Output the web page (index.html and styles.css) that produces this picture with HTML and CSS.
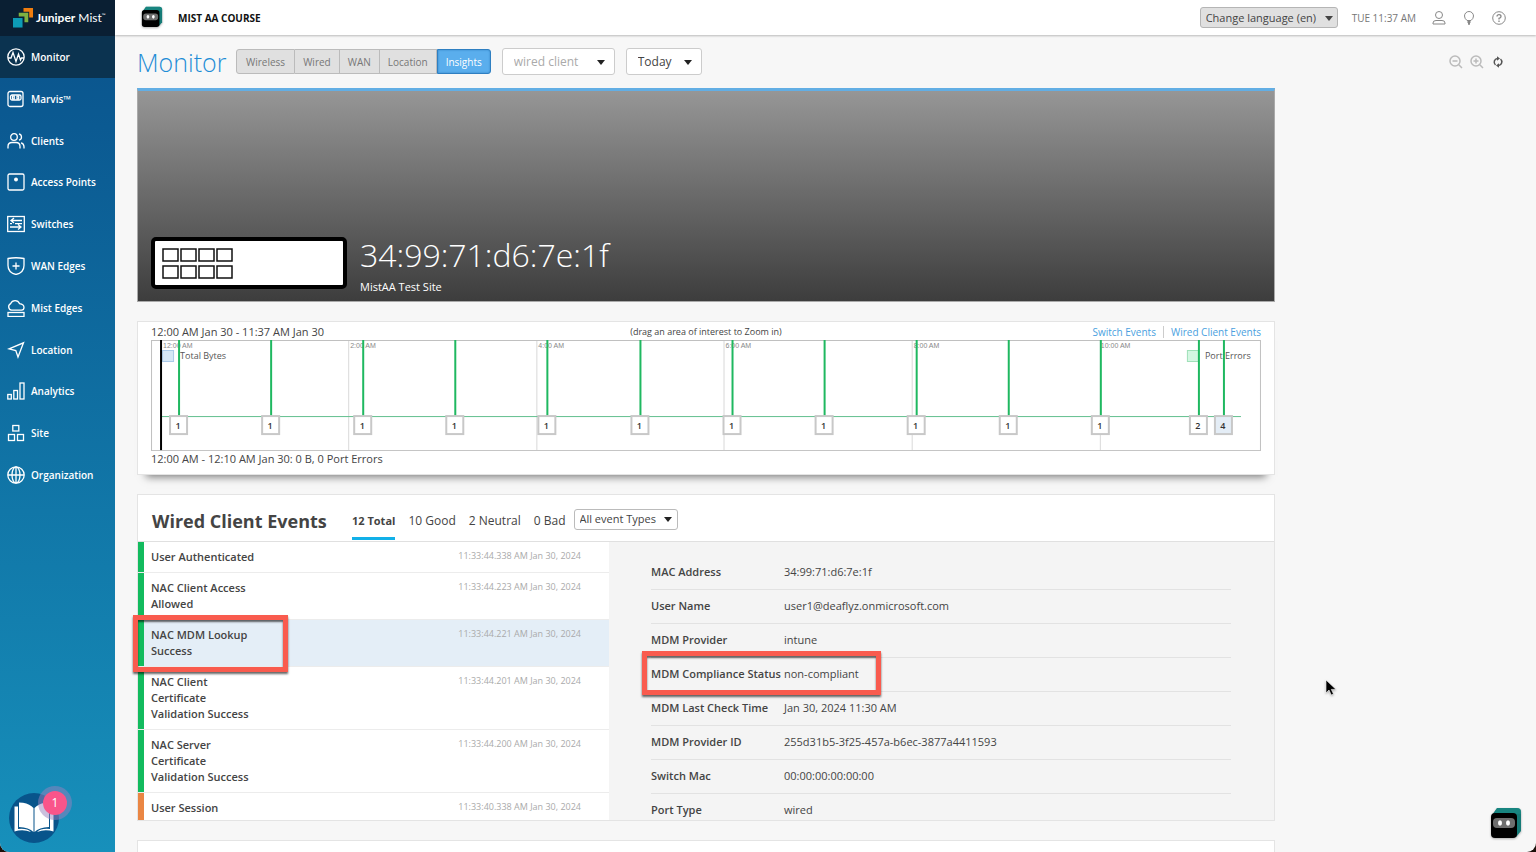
FILE: index.html
```html
<!DOCTYPE html>
<html lang="en">
<head>
<meta charset="utf-8">
<title>Juniper Mist - Monitor</title>
<link rel="stylesheet" href="styles.css">
</head>
<body>
<svg class="defs" aria-hidden="true">
  <defs>
    <symbol id="bot" viewBox="0 0 32 34">
      <path d="M7 1h20q4 0 4 4v19l-5 6L2 8z" fill="#157b77"/>
      <path d="M7 1h20q4 0 4 4v2L5 6z" fill="#1b8f89" opacity=".5"/>
      <rect x="1" y="6" width="26" height="25" rx="4" fill="#000"/>
      <rect x="3" y="11" width="22" height="10" rx="4" fill="#6e6e6e"/>
      <ellipse cx="10" cy="16" rx="2" ry="2.7" fill="#fff"/>
      <ellipse cx="18" cy="16" rx="2" ry="2.7" fill="#fff"/>
    </symbol>
    <symbol id="marker" viewBox="0 0 20 96" overflow="visible">
      <path d="M10 0v76" stroke="#1fb860" stroke-width="2"/>
      <rect x="1" y="76" width="17" height="18" stroke="#c8c8c8" stroke-width="2"/>
    </symbol>
  </defs>
</svg>
<div class="app">
  <aside class="sidebar">
    <a class="brand" href="#">
      <svg class="brand-mark" viewBox="0 0 22 21" aria-hidden="true">
        <path d="M11 0h10v10h-4V4h-6z" fill="#ef7d0f"/>
        <path d="M6 5h10v10h-4V9H6z" fill="#7fb241"/>
        <path d="M0 10.500h10v10H0z" fill="#0d9bb5"/>
      </svg>
      <span class="brand-name"><b>Juniper</b> Mist<sup>™</sup></span>
    </a>
    <nav class="menu">
      <a class="menu-item active" href="#"><svg viewBox="0 0 18 18"><circle cx="9" cy="9" r="8.200"/><path d="M1 10h3l2-5.500 3 9L11.500 6l2 6 1-2H17"/></svg>Monitor</a>
      <a class="menu-item" href="#"><svg viewBox="0 0 18 18"><rect x="1" y="1.500" width="15" height="15" rx="2"/><rect x="3.500" y="5" width="10.500" height="5" rx="1.500"/><rect x="5.500" y="6" width="1.700" height="3"/><rect x="10" y="6" width="1.700" height="3"/></svg>Marvis™</a>
      <a class="menu-item" href="#"><svg viewBox="0 0 18 18"><circle cx="7" cy="5" r="3.300"/><path d="M1 16.500v-2q0-4 4-4h4q4 0 4 4v2M12 1.800a3.300 3.300 0 0 1 0 6.400M14 10.800q3 .7 3 4v1.700"/></svg>Clients</a>
      <a class="menu-item" href="#"><svg viewBox="0 0 18 18"><rect x="1" y="1" width="16" height="16" rx="1.500"/><circle cx="9" cy="6.500" r="1.300" fill="#fff"/></svg>Access Points</a>
      <a class="menu-item" href="#"><svg viewBox="0 0 18 18"><rect x=".7" y="1.500" width="16.600" height="15"/><path d="M15 5.500H4M7 3 4 5.500 7 8M3 12h11M11 9.500l3 2.500-3 2.500M8 8.700h7M3 8.700h2"/></svg>Switches</a>
      <a class="menu-item" href="#"><svg viewBox="0 0 18 18"><path d="M1 1.500q8-1.500 16 0v7q0 7-8 9-8-2-8-9zM9 5.500v7M5.500 9h7"/></svg>WAN Edges</a>
      <a class="menu-item" href="#"><svg viewBox="0 0 18 18"><path d="M4.500 11.200a3.500 3.500 0 0 1-.8-6.600 4.700 4.700 0 0 1 8.800 0q4.500.6 4.500 3.800 0 2.500-2.500 2.800z"/><rect x="1" y="13.500" width="16" height="4"/></svg>Mist Edges</a>
      <a class="menu-item" href="#"><svg viewBox="0 0 18 18"><path d="M16.500 1.800 11 16l-2.200-6.500L2 7.800z"/></svg>Location</a>
      <a class="menu-item" href="#"><svg viewBox="0 0 18 18"><rect x=".8" y="12.500" width="3.500" height="4.500"/><rect x="6.800" y="8.500" width="3.700" height="8.500"/><rect x="13" y="1" width="4" height="16"/></svg>Analytics</a>
      <a class="menu-item" href="#"><svg viewBox="0 0 18 18"><rect x="5.800" y="1.500" width="6" height="5.500"/><rect x="1.500" y="10.500" width="6" height="6"/><rect x="10.500" y="10.500" width="6" height="6"/></svg>Site</a>
      <a class="menu-item" href="#"><svg viewBox="0 0 18 18"><circle cx="9" cy="9" r="8.200"/><ellipse cx="9" cy="9" rx="4" ry="8.200"/><path d="M1 9h16M9 1v16"/></svg>Organization</a>
    </nav>
    <button class="guide" aria-label="Open guide, 1 new item">
      <svg viewBox="0 0 50 50" aria-hidden="true">
        <circle cx="25" cy="25" r="25" fill="#08548b"/>
        <path d="M5.500 13.500H9V36q9-1 13 3Q14 36 5.500 38.500zM44.500 13.500H41V36q-9-1-13 3 8-3 16.500-.5z" fill="#fff"/>
        <path d="M10 9.500q4 0 4 .3 7 1.200 10.500 5.200V39Q20 34.500 10 34zM40 9.500q-4 0-4 .3-7 1.200-10.500 5.200V39Q30 34.500 40 34z" fill="#fff"/>
      </svg>
      <span class="guide-count">1</span>
    </button>
  </aside>

  <div class="page">
    <header class="topbar">
      <svg class="bot bot-small" aria-hidden="true"><use href="#bot"/></svg>
      <strong class="org">MIST AA COURSE</strong>
      <label class="select select-lang"><select aria-label="Language"><option>Change language (en)</option></select></label>
      <time class="clock">TUE 11:37 AM</time>
      <button class="icon-btn" aria-label="Account"><svg viewBox="0 0 14 14"><circle cx="7" cy="4" r="3.500"/><path d="M1 13v-1q0-2.500 3-2.500h6q3 0 3 2.500v1z"/></svg></button>
      <button class="icon-btn" aria-label="Tips"><svg viewBox="0 0 14 14"><path d="M5 9.500Q2.500 7.500 2.500 5a4.500 4.500 0 0 1 9 0Q11.500 7.500 9 9.500z"/><path d="M5.500 11h3M6 12.800h2" stroke-width="2"/></svg></button>
      <button class="icon-btn" aria-label="Help"><svg viewBox="0 0 14 14"><circle cx="7" cy="7" r="6.300"/><path d="M5 5.500Q5 3.700 7 3.700t2 1.700Q9 6.500 7 7.300V8.500M7 9.600v1.300" stroke-width="1.300"/></svg></button>
    </header>

    <main class="content">
      <div class="toolbar">
        <h1 class="title">Monitor</h1>
        <div class="tabs">
          <button>Wireless</button><button>Wired</button><button>WAN</button><button>Location</button><button class="on">Insights</button>
        </div>
        <label class="select select-client"><select aria-label="Scope"><option>wired client</option></select></label>
        <label class="select select-day"><select aria-label="Time range"><option>Today</option></select></label>
        <div class="tools">
          <button class="icon-btn dim" aria-label="Zoom out"><svg viewBox="0 0 14 14"><circle cx="6" cy="6" r="5"/><path d="M9.800 9.800 13 13M3.500 6h5"/></svg></button>
          <button class="icon-btn dim" aria-label="Zoom in"><svg viewBox="0 0 14 14"><circle cx="6" cy="6" r="5"/><path d="M9.800 9.800 13 13M3.500 6h5M6 3.500v5"/></svg></button>
          <button class="icon-btn dark" aria-label="Refresh"><svg viewBox="0 0 14 14"><path d="M4.500 10A3.700 3.700 0 0 1 6.500 3.500M9.500 4a3.700 3.700 0 0 1-2 6.500"/><path d="M6 1.300 9 3.500 6 5.800zM8 8.200 5 10.500l3 2.300z" fill="#555" stroke="none"/></svg></button>
        </div>
      </div>

      <div class="stack">
        <section class="hero">
          <svg class="device" viewBox="0 0 196 52" aria-hidden="true">
            <rect x="2" y="2" width="192" height="48" rx="3" fill="#fff" stroke="#000" stroke-width="4"/>
            <g fill="#fff" stroke="#111" stroke-width="1.500">
              <path d="M12 12h15v12H12zM30 12h15v12H30zM48 12h15v12H48zM66 12h15v12H66zM12 29h15v12H12zM30 29h15v12H30zM48 29h15v12H48zM66 29h15v12H66z"/>
            </g>
          </svg>
          <div>
            <h2 class="mac">34:99:71:d6:7e:1f</h2>
            <p class="site">MistAA Test Site</p>
          </div>
        </section>

        <section class="card timeline">
          <div class="timeline-head">
            <span>12:00 AM Jan 30 - 11:37 AM Jan 30</span>
            <span class="hint">(drag an area of interest to Zoom in)</span>
            <span class="links"><a href="#">Switch Events</a><a href="#">Wired Client Events</a></span>
          </div>
          <svg class="chart" viewBox="0 0 1109 111" role="img" aria-label="Events over time">
            <rect x=".5" y=".5" width="1108" height="110" fill="#fff" stroke="#c0c0c0"/>
            <path d="M197.500 1v109M385.500 1v109M572.500 1v109M760.500 1v109M948.500 1v109" stroke="#d9d9d9"/>
            <rect x="11.500" y="10.500" width="11" height="11" fill="#d5e7f6" stroke="#a9c9e8"/>
            <rect x="1035.500" y="10.500" width="11" height="11" fill="#d4f7e2" stroke="#9fe0b8"/>
            <rect x="10" y="76" width="1079" height="1" fill="#63c08f"/>
            <g class="axis">
              <text x="12" y="8">12:00 AM</text><text x="199" y="8">2:00 AM</text><text x="387" y="8">4:00 AM</text>
              <text x="574" y="8">6:00 AM</text><text x="762" y="8">8:00 AM</text><text x="949" y="8">10:00 AM</text>
            </g>
            <g class="legend"><text x="29" y="19">Total Bytes</text><text x="1053" y="19">Port Errors</text></g>
            <g fill="#fff">
              <use href="#marker" x="18" width="20" height="96"/><use href="#marker" x="110" width="20" height="96"/>
              <use href="#marker" x="202" width="20" height="96"/><use href="#marker" x="294" width="20" height="96"/>
              <use href="#marker" x="386" width="20" height="96"/><use href="#marker" x="479" width="20" height="96"/>
              <use href="#marker" x="571" width="20" height="96"/><use href="#marker" x="663" width="20" height="96"/>
              <use href="#marker" x="755" width="20" height="96"/><use href="#marker" x="847" width="20" height="96"/>
              <use href="#marker" x="939" width="20" height="96"/><use href="#marker" x="1037" width="20" height="96"/>
            </g>
            <use href="#marker" x="1062" width="20" height="96" fill="#e4edf6"/>
            <g class="counts">
              <text x="27" y="89">1</text><text x="119" y="89">1</text><text x="211" y="89">1</text><text x="303" y="89">1</text>
              <text x="395" y="89">1</text><text x="488" y="89">1</text><text x="580" y="89">1</text><text x="672" y="89">1</text>
              <text x="764" y="89">1</text><text x="856" y="89">1</text><text x="948" y="89">1</text><text x="1046" y="89">2</text><text x="1071" y="89">4</text>
            </g>
            <path d="M10 0v110" stroke="#000" stroke-width="2"/>
          </svg>
          <p class="timeline-foot">12:00 AM - 12:10 AM Jan 30: 0 B, 0 Port Errors</p>
        </section>

        <section class="card events">
          <div class="events-head">
            <h2 class="events-title">Wired Client Events</h2>
            <div class="filters">
              <button class="on">12 Total</button><button>10 Good</button><button>2 Neutral</button><button>0 Bad</button>
            </div>
            <label class="select select-type"><select aria-label="Event type"><option>All event Types</option></select></label>
          </div>
          <div class="events-body">
            <ul class="list">
              <li><span>User Authenticated</span><time>11:33:44.338 AM Jan 30, 2024</time></li>
              <li><span>NAC Client Access Allowed</span><time>11:33:44.223 AM Jan 30, 2024</time></li>
              <li class="selected"><span>NAC MDM Lookup Success</span><time>11:33:44.221 AM Jan 30, 2024</time></li>
              <li><span>NAC Client Certificate Validation Success</span><time>11:33:44.201 AM Jan 30, 2024</time></li>
              <li><span>NAC Server Certificate Validation Success</span><time>11:33:44.200 AM Jan 30, 2024</time></li>
              <li class="neutral"><span>User Session</span><time>11:33:40.338 AM Jan 30, 2024</time></li>
            </ul>
            <div class="details">
              <table>
                <tr><th scope="row">MAC Address</th><td>34:99:71:d6:7e:1f</td></tr>
                <tr><th scope="row">User Name</th><td>user1@deaflyz.onmicrosoft.com</td></tr>
                <tr><th scope="row">MDM Provider</th><td>intune</td></tr>
                <tr><th scope="row">MDM Compliance Status</th><td>non-compliant</td></tr>
                <tr><th scope="row">MDM Last Check Time</th><td>Jan 30, 2024 11:30 AM</td></tr>
                <tr><th scope="row">MDM Provider ID</th><td>255d31b5-3f25-457a-b6ec-3877a4411593</td></tr>
                <tr><th scope="row">Switch Mac</th><td>00:00:00:00:00:00</td></tr>
                <tr><th scope="row">Port Type</th><td>wired</td></tr>
              </table>
            </div>
          </div>
          <div class="callout callout-event"></div>
          <div class="callout callout-status"></div>
        </section>

        <section class="card next"></section>
      </div>
    </main>
  </div>
  <button class="assistant" aria-label="Marvis assistant"><svg class="bot" aria-hidden="true"><use href="#bot"/></svg></button>
  <svg class="pointer" viewBox="0 0 12 18" aria-hidden="true"><path d="M1 1v13l3-3 2.300 5 2.200-1-2.200-4.600H11z" fill="#000" stroke="#fff" stroke-width=".6"/></svg>
</div>
</body>
</html>
```
FILE: styles.css
```css
* { box-sizing: border-box; }
body {
  margin: 0;
  background: #1c0f0a;
  color: #444;
  font: 11px/16px "Open Sans", "Noto Sans", sans-serif;
}
h1, h2, p, ul { margin: 0; padding: 0; font-weight: 400; }
a { color: inherit; text-decoration: none; }
button, select { font: inherit; color: inherit; }
button { background: none; border: 0; padding: 0; }
.defs { position: absolute; width: 0; height: 0; }

.app {
  position: relative;
  display: flex;
  height: 100vh;
  overflow: hidden;
  background: #f7f7f7;
  border-radius: 0 0 9px 9px;
}

/* Sidebar */
.sidebar {
  position: relative;
  flex: 0 0 115px;
  background: linear-gradient(#0b528b, #0b5a92 15%, #1177a8 60%, #1790bb);
  color: #fff;
}
.brand {
  display: flex;
  align-items: center;
  gap: 2px;
  height: 36px;
  padding-left: 13px;
  background: #0a1f33;
}
.brand-mark { width: 21px; height: 20px; }
.brand-name { font: 12px/16px Lato, sans-serif; white-space: nowrap; }
.brand-name sup { font-size: 5px; line-height: 1px; vertical-align: 5px; }
.menu { display: flex; flex-direction: column; height: 460px; }
.menu-item {
  display: flex;
  flex: 1;
  align-items: center;
  gap: 6px;
  padding-left: 7px;
  font-size: 10px;
  font-weight: 600;
}
.menu-item.active { background: #0b3350; }
.menu-item svg { width: 18px; height: 18px; fill: none; stroke: #fff; stroke-width: 1.300; }
.guide { position: absolute; left: 9px; bottom: 9px; width: 50px; height: 50px; }
.guide svg { display: block; width: 50px; height: 50px; }
.guide-count {
  position: absolute;
  left: 34px;
  top: -2px;
  width: 24px;
  height: 24px;
  border-radius: 50%;
  background: #f9558a;
  box-shadow: 0 0 0 5px rgba(150, 130, 190, 0.5);
  color: #fff;
  font-size: 12px;
  line-height: 24px;
}

/* Top bar */
.page { flex: 1; min-width: 0; display: flex; flex-direction: column; }
.topbar {
  display: flex;
  align-items: center;
  flex: 0 0 35px;
  padding: 0 30px 0 26px;
  background: #fff;
  box-shadow: 0 1px 2px rgba(0, 0, 0, 0.25);
}
.bot { display: block; width: 32px; height: 34px; filter: drop-shadow(0 1px 1px rgba(0, 0, 0, 0.3)); }
.bot-small { width: 22px; height: 23px; }
.org { flex: 1; padding-left: 15px; font-size: 10px; color: #111; }
.clock { margin: 0 16px 0 14px; font-size: 10px; color: #777; }
.icon-btn { width: 14px; height: 14px; }
.icon-btn svg { display: block; width: 14px; height: 14px; fill: none; stroke: #888; }
.topbar .icon-btn + .icon-btn { margin-left: 16px; }

.select { position: relative; display: block; }
.select select {
  display: block;
  width: 100%;
  height: 100%;
  appearance: none;
  border: 1px solid #ccc;
  border-radius: 3px;
  background: #fff;
  outline: 0;
}
.select::after {
  content: "";
  position: absolute;
  right: 10px;
  top: 50%;
  margin-top: -2px;
  border: 4px solid transparent;
  border-top: 5px solid #222;
  border-bottom: 0;
  pointer-events: none;
}
.select-lang { width: 138px; height: 21px; }
.select-lang select { padding: 0 5px; background: #e0e0e0; border-color: #b5b5b5; }
.select-lang::after { right: 5px; border-top-color: #444; }

/* Page content */
.content { flex: 1; min-height: 0; padding: 0 31px 0 22px; }
.toolbar { display: flex; align-items: center; height: 53px; }
.title { width: 99px; font-size: 25px; line-height: 32px; font-weight: 300; color: #1f8dd6; }
.tabs { display: flex; height: 25px; }
.tabs button {
  padding: 0 8px;
  border: 1px solid #bbb;
  border-left-width: 0;
  background: #e0e0e0;
  color: #777;
  font-size: 10px;
}
.tabs button:first-child { padding: 0 9px; border-left-width: 1px; border-radius: 3px 0 0 3px; }
.tabs .on {
  border: 1px solid #2f7fc1;
  border-radius: 0 3px 3px 0;
  background: #5aaeed;
  box-shadow: inset 0 0 2px #2f7fc1;
  color: #fff;
}
.select-client { width: 113px; height: 27px; margin: 0 11px; }
.select-day { width: 76px; height: 27px; }
.select-client select, .select-day select { padding: 0 11px; font-size: 12px; }
.select-client select { color: #aaa; }
.tools { display: flex; gap: 7px; margin-left: auto; }
.dim svg { stroke: #bbb; stroke-width: 1.500; }
.dark svg { stroke: #555; stroke-width: 1.500; }

.stack { display: flex; flex-direction: column; gap: 19px; max-width: 1138px; }
.hero {
  display: flex;
  align-items: flex-end;
  gap: 13px;
  height: 214px;
  padding: 0 13px 12px;
  border: 1px solid #aaa;
  border-top: 3px solid #62aee4;
  background: linear-gradient(#969696, #3d3d3d);
  color: #fff;
}
.device { display: block; width: 196px; height: 52px; }
.mac { font-size: 32px; line-height: 44px; font-weight: 300; }
.site { margin-bottom: -6px; padding-top: 2px; line-height: 16px; }

.card { position: relative; background: #fff; border: 1px solid #e4e4e4; }
.timeline { padding: 2px 13px 7px; box-shadow: 0 11px 8px -9px rgba(0, 0, 0, 0.5); }
.timeline-head { display: grid; grid-template-columns: 1fr auto 1fr; align-items: center; }
.hint { font-size: 9px; }
.links { display: flex; justify-content: flex-end; font-size: 10px; line-height: 12px; color: #4a9fe0; }
.links a + a { margin-left: 7px; padding-left: 7px; border-left: 1px solid #ccc; }
.chart { display: block; width: 100%; height: auto; }
.axis { font: 7px "Liberation Sans", Arial, sans-serif; fill: #888; }
.legend { font-size: 9px; fill: #555; }
.counts { font-size: 9px; font-weight: 600; fill: #333; text-anchor: middle; }

/* Events */
.events-head { display: flex; align-items: center; height: 47px; padding: 6px 14px 0; border-bottom: 1px solid #e0e0e0; }
.events-title { width: 200px; font-size: 18px; line-height: 24px; font-weight: 700; }
.filters { display: flex; gap: 13px; height: 100%; }
.filters button { height: 39px; padding-top: 3px; font-size: 12px; border-bottom: 3px solid transparent; }
.filters .on { font-size: 11px; font-weight: 700; border-bottom-color: #12b0e8; }
.select-type { width: 104px; height: 21px; margin: -4px 0 0 8px; }
.select-type select { padding: 0 5px; border-color: #bbb; }
.select-type::after { right: 6px; }
.events-body { display: grid; grid-template-columns: 471px 1fr; height: 278px; overflow: hidden; }
.list { list-style: none; }
.list li {
  display: flex;
  align-items: flex-start;
  justify-content: space-between;
  padding: 7px 28px 7px 13px;
  border-bottom: 1px solid #ececec;
  background: linear-gradient(90deg, #12bb5e 6px, transparent 6px);
}
.list .neutral { background: linear-gradient(90deg, #ea8644 6px, transparent 6px); }
.list .selected { background: linear-gradient(90deg, #12bb5e 6px, #e4eef7 6px); }
.list span { width: 106px; font-weight: 600; }
.list time { margin-top: -1px; font-size: 9px; color: #aaa; }
.details { padding: 13px 43px 0 42px; background: #f4f4f4; }
.details table { width: 100%; border-collapse: collapse; }
.details th, .details td { height: 34px; padding: 0; border-bottom: 1px solid #e2e2e2; text-align: left; }
.details th { width: 133px; font-weight: 600; white-space: nowrap; }
.callout { position: absolute; border: 5px solid #f95b4e; box-shadow: 0 2px 2px rgba(0, 0, 0, 0.6), inset 0 2px 2px rgba(0, 0, 0, 0.6); }
.callout-event { left: -5px; top: 120px; width: 155px; height: 57px; }
.callout-status { left: 504px; top: 156px; width: 239px; height: 44px; }
.next { height: 60px; }

/* Floating items */
.assistant { position: absolute; right: 14px; bottom: 11px; }
.pointer { position: absolute; left: 1325px; top: 679px; width: 12px; height: 18px; filter: drop-shadow(0 1px 1px rgba(0, 0, 0, 0.3)); }
```
